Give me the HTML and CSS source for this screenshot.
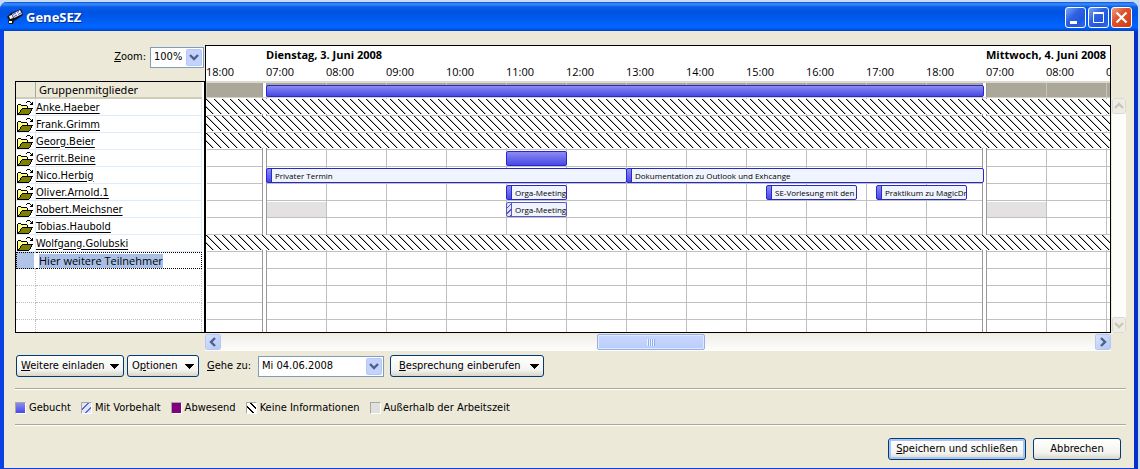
FILE: index.html
```
<!DOCTYPE html>
<html lang="de">
<head>
<meta charset="utf-8">
<title>GeneSEZ</title>
<link rel="stylesheet" href="styles.css">
</head>
<body>
<svg class="defs" aria-hidden="true">
  <symbol id="folder" viewBox="0 0 16 14" shape-rendering="crispEdges">
    <path d="M1 4h4v1h6v3H5L1 13z" fill="#ffff66"/>
    <path d="M2 13l3-5h10l-3 5z" fill="#808000"/>
    <path d="M1 3h3v1H1zM0 4h1v9H0zM4 4h6v1H4zM10 5h1v3h-1zM5 7h11v1H5zM4 8h1v1H4zM3 9h1v2H3zM2 11h1v1H2zM1 12h1v1H1zM0 13h12v1H0zM14 8h1v2h-1zM13 10h1v2h-1zM12 12h1v1h-1zM9 1h1v1H9zM10 0h3v1h-3zM13 1h1v1h-1zM15 1h1v3h-1zM13 3h2v1h-2zM14 2h1v1h-1z" fill="#000"/>
    <path d="M2 5h1v1H2zM4 6h1v1H4zM6 5h1v1H6zM2 7h1v1H2zM8 6h1v1H8z" fill="#fff"/>
  </symbol>
  <symbol id="down" viewBox="0 0 9 5" shape-rendering="crispEdges"><path d="M0 0h9v1H8v1H7v1H6v1H5v1H4V4H3V3H2V2H1V1H0z"/></symbol>
  <symbol id="chev" viewBox="0 0 10 10"><path d="M1 3l4 4 4-4" fill="none" stroke="currentColor" stroke-width="2.400"/></symbol>
</svg>
<div class="window">
  <header class="titlebar">
    <svg class="app-icon" viewBox="0 0 16 16">
      <path d="M4 4l10-4 2 6-7 5-2 1-1 3H2l-1-3 1-1-2-3z" fill="#111"/>
      <path d="M5 5l8-4 2 4-8 4z" fill="#eef"/>
      <path d="M6 5.500l3-1.500M10 3.500l2-1M7 7.500l3-1.500M11 5.500l3-1.500" stroke="#4058d8" fill="none"/>
      <path d="M2 7l3-1 1 3-3 1zM2 12h3v2H2z" fill="#fff"/>
    </svg>
    <h1 class="title">GeneSEZ</h1>
    <div class="caption-buttons">
      <button class="caption" aria-label="Minimieren"><svg viewBox="0 0 19 19"><path d="M4 13h7v3H4z" fill="#fff"/></svg></button>
      <button class="caption" aria-label="Maximieren"><svg viewBox="0 0 19 19"><path d="M4.500 5.500h10v9h-10z" fill="none" stroke="#fff"/><path d="M4 4h11v2H4z" fill="#fff"/></svg></button>
      <button class="caption close" aria-label="Schließen"><svg viewBox="0 0 19 19"><path d="M4.500 4.500l10 10M14.500 4.500l-10 10" stroke="#fff" stroke-width="2.200"/></svg></button>
    </div>
  </header>
  <main class="content">
    <section class="planner">
      <div class="side">
        <div class="zoom">
          <label for="zoom"><u>Z</u>oom:</label>
          <select id="zoom" class="combo zoom-select"><option>100%</option></select>
        </div>
        <table class="members">
          <thead><tr><th class="icon-cell"></th><th class="name-head" scope="col">Gruppenmitglieder</th></tr></thead>
          <tbody>
            <tr><td class="icon-cell"><svg class="folder"><use href="#folder"/></svg></td><td><a href="#">Anke.Haeber</a></td></tr>
            <tr><td class="icon-cell"><svg class="folder"><use href="#folder"/></svg></td><td><a href="#">Frank.Grimm</a></td></tr>
            <tr><td class="icon-cell"><svg class="folder"><use href="#folder"/></svg></td><td><a href="#">Georg.Beier</a></td></tr>
            <tr><td class="icon-cell"><svg class="folder"><use href="#folder"/></svg></td><td><a href="#">Gerrit.Beine</a></td></tr>
            <tr><td class="icon-cell"><svg class="folder"><use href="#folder"/></svg></td><td><a href="#">Nico.Herbig</a></td></tr>
            <tr><td class="icon-cell"><svg class="folder"><use href="#folder"/></svg></td><td><a href="#">Oliver.Arnold.1</a></td></tr>
            <tr><td class="icon-cell"><svg class="folder"><use href="#folder"/></svg></td><td><a href="#">Robert.Meichsner</a></td></tr>
            <tr><td class="icon-cell"><svg class="folder"><use href="#folder"/></svg></td><td><a href="#">Tobias.Haubold</a></td></tr>
            <tr><td class="icon-cell"><svg class="folder"><use href="#folder"/></svg></td><td><a href="#">Wolfgang.Golubski</a></td></tr>
            <tr class="new-row"><td class="icon-cell"></td><td><input class="new-name" aria-label="Teilnehmer hinzufügen" value="Hier weitere Teilnehmer"></td></tr>
            <tr class="blank"><td class="icon-cell"></td><td></td></tr>
            <tr class="blank"><td class="icon-cell"></td><td></td></tr>
            <tr class="blank"><td class="icon-cell"></td><td></td></tr>
            <tr class="blank last"><td class="icon-cell"></td><td></td></tr>
          </tbody>
        </table>
      </div>
      <div class="timeline">
        <div class="days slots"><strong class="day1">Dienstag, 3. Juni 2008</strong><strong class="day2">Mittwoch, 4. Juni 2008</strong></div>
        <div class="hours"><span>18:00</span><span>07:00</span><span>08:00</span><span>09:00</span><span>10:00</span><span>11:00</span><span>12:00</span><span>13:00</span><span>14:00</span><span>15:00</span><span>16:00</span><span>17:00</span><span>18:00</span><span>07:00</span><span>08:00</span><span>09:00</span></div>
        <div class="summary slots"><div class="bar total" style="grid-column: 13 / span 144"></div></div>
        <div class="canvas">
          <div class="row"><div class="unknown"></div></div>
          <div class="row"><div class="unknown"></div></div>
          <div class="row"><div class="unknown"></div></div>
          <div class="row slots"><div class="bar" style="grid-column: 61 / span 12"></div></div>
          <div class="row slots"><div class="event" style="grid-column: 13 / span 72">Privater Termin</div><div class="event until-close" style="grid-column: 85 / span 72">Dokumentation zu Outlook und Exhcange</div></div>
          <div class="row slots"><div class="event" style="grid-column: 61 / span 12">Orga-Meeting</div><div class="event" style="grid-column: 113 / span 18">SE-Vorlesung mit den</div><div class="event" style="grid-column: 135 / span 18">Praktikum zu MagicDr</div></div>
          <div class="row slots"><div class="off" style="grid-column: 13 / span 12"></div><div class="event tentative" style="grid-column: 61 / span 12">Orga-Meeting</div><div class="off" style="grid-column: 157 / span 12"></div></div>
          <div class="row"></div>
          <div class="row"><div class="unknown"></div></div>
          <div class="row"></div><div class="row"></div><div class="row"></div><div class="row"></div><div class="row last"></div>
        </div>
      </div>
      <div class="vscroll">
        <button class="arrow disabled" disabled aria-label="Nach oben"><svg class="up"><use href="#chev"/></svg></button>
        <button class="arrow disabled" disabled aria-label="Nach unten"><svg><use href="#chev"/></svg></button>
      </div>
      <div class="hscroll">
        <button class="arrow" aria-label="Nach links"><svg class="left"><use href="#chev"/></svg></button>
        <div class="track"><div class="thumb"><i></i></div></div>
        <button class="arrow" aria-label="Nach rechts"><svg class="right"><use href="#chev"/></svg></button>
      </div>
    </section>
    <section class="toolbar">
      <button class="btn menu invite"><span><u>W</u>eitere einladen</span><svg class="down"><use href="#down"/></svg></button>
      <button class="btn menu options"><span>O<u>p</u>tionen</span><svg class="down"><use href="#down"/></svg></button>
      <label class="goto" for="date"><u>G</u>ehe zu:</label>
      <select id="date" class="combo date-select"><option>Mi 04.06.2008</option></select>
      <button class="btn menu meeting"><span><u>B</u>esprechung einberufen</span><svg class="down"><use href="#down"/></svg></button>
    </section>
    <ul class="legend">
      <li><i class="key booked"></i>Gebucht</li>
      <li><i class="key maybe"></i>Mit Vorbehalt</li>
      <li><i class="key away"></i>Abwesend</li>
      <li><i class="key none"></i>Keine Informationen</li>
      <li><i class="key outside"></i>Außerhalb der Arbeitszeit</li>
    </ul>
    <footer class="actions">
      <button class="btn primary"><span><u>S</u>peichern und schließen</span></button>
      <button class="btn cancel">Abbrechen</button>
    </footer>
  </main>
</div>
</body>
</html>
```
FILE: styles.css
```
* { box-sizing: border-box; }
body {
  margin: 0;
  padding: 2px 2px 0 0;
  background: #c9daf5;
  color: #000;
  font: 11px/14px "DejaVu Sans Condensed", "DejaVu Sans", sans-serif;
}
button, select, input { font: inherit; color: inherit; margin: 0; }
.defs { position: absolute; width: 0; height: 0; }

.window {
  display: flex;
  flex-direction: column;
  min-height: calc(100vh - 2px);
  background: #ece9d8;
  border: solid #0842e0;
  border-width: 0 4px 3px;
  border-right-color: #0430c8;
  border-radius: 7px 7px 0 0;
}
.titlebar {
  display: flex;
  align-items: center;
  gap: 3px;
  height: 29px;
  margin: 0 -4px;
  padding: 1px 6px 0 7px;
  border-radius: 7px 7px 0 0;
  background: linear-gradient(#0a50d8, #3a90ff 2px, #0a5ce8 5px, #0053e1 10px, #0058ee 16px, #0066ff 24px, #0060fc 26px, #0040c8);
}
.app-icon { width: 16px; height: 16px; }
.title {
  flex: 1;
  margin: 0;
  color: #fff;
  font: bold 13px/16px "Open Sans", sans-serif;
  text-shadow: 1px 1px #0a2a80;
}
.caption-buttons { display: flex; gap: 2px; }
.caption {
  width: 21px;
  height: 21px;
  padding: 0;
  border: 1px solid #fff;
  border-radius: 3px;
  background: linear-gradient(135deg, #7ea4f4, #2f62e4 40%, #1f56e0 70%, #2c6cf0);
}
.caption svg { display: block; width: 19px; height: 19px; }
.close { background: linear-gradient(135deg, #f0a080, #e0512c 40%, #d03c12); }

.content { flex: 1; display: flex; flex-direction: column; padding: 14px 8px 8px 11px; }

.planner {
  display: grid;
  grid-template-columns: 190px minmax(0, 1fr) 15px;
}
.side { display: flex; flex-direction: column; }
.zoom { display: flex; justify-content: flex-end; align-items: center; gap: 4px; height: 36px; padding: 0 1px 12px 0; }
.combo {
  appearance: none;
  height: 21px;
  padding: 0 18px 0 3px;
  border: 1px solid #7f9db9;
  border-radius: 0;
  background:
    url("data:image/svg+xml,%3Csvg xmlns='http://www.w3.org/2000/svg' width='16' height='17'%3E%3Crect x='.5' y='.5' width='15' height='16' rx='1' fill='%23c3d3fd' stroke='%23b5c8f5'/%3E%3Cpath d='M4 6l4 4 4-4' fill='none' stroke='%234d6185' stroke-width='2.400'/%3E%3C/svg%3E") no-repeat right 1px center,
    #fff;
}
.zoom-select { width: 54px; }
.date-select { width: 126px; }

.members {
  width: 100%;
  table-layout: fixed;
  border-collapse: separate;
  border-spacing: 0;
  border: 1px solid #000;
  padding-right: 2px;
  background: #fff;
}
.members th, .members td { height: 17px; padding: 0; line-height: 14px; }
.members td { padding-top: 1px; }
.members th { background: #ece9d8; border-bottom: 2px solid #d0ccba; text-align: left; font-weight: normal; }
.members .icon-cell { width: 20px; }
.members td { border-bottom: 1px solid #deebfa; border-right: 1px solid #deebfa; }
.members th.icon-cell { border-right: 1px solid #aca899; }
.members th.name-head { padding-left: 3px; font-family: "Noto Sans", sans-serif; font-size: 11px; }
.members a { color: #000; text-decoration: underline; text-underline-offset: 2px; }
.folder { display: block; width: 16px; height: 14px; margin-left: 1px; }
.members .new-row td { padding-top: 0; border: 1px dotted #000; border-left: 0; }
.members .new-row .icon-cell { background: #b0c4e8; border-left: 1px dotted #000; border-right: 2px solid #fff; }
.new-name {
  display: block;
  width: 124px;
  height: 14px;
  margin-left: 3px;
  padding: 0;
  border: 0;
  background: #a9bfe6;
  font-family: "Open Sans", sans-serif;
  font-size: 11px;
}
.members .blank td { border-bottom: 1px dotted #c0c0c0; border-right: 1px dotted #c0c0c0; }
.members .last td { height: 12px; border-bottom: 0; }

.timeline { border: 1px solid #000; background: #fff; overflow: hidden; }
.slots { display: grid; grid-template-columns: repeat(200, 5px); }
.days { height: 17px; white-space: nowrap; font: 11px/17px "Open Sans", sans-serif; }
.day1 { grid-column: 13 / span 60; }
.day2 { grid-column: 157 / span 30; }
.hours { display: grid; grid-auto-flow: column; grid-auto-columns: 60px; height: 18px; font: 11px/18px "Open Sans", sans-serif; }
.summary {
  height: 18px;
  border-top: 2px solid #dcd9cf;
  background:
    linear-gradient(#d4d1c6, #d4d1c6) 0 14px / 100% 1px no-repeat,
    linear-gradient(90deg, transparent 56px, #999 56px 57px, #fff 57px 60px, #999 60px 61px, transparent 61px) 0 0 / 720px 100%,
    linear-gradient(90deg, #c6c3bb 1px, transparent 1px) 0 0 / 60px 100%,
    linear-gradient(#aca899 14px, #fff 14px);
}
.canvas {
  background:
    linear-gradient(#fff, #fff) 0 0 / 1px 100% no-repeat,
    linear-gradient(90deg, transparent 56px, #999 56px 57px, #fff 57px 60px, #999 60px 61px, transparent 61px) 0 0 / 720px 100%,
    linear-gradient(90deg, #c0c0c0 1px, transparent 1px) 0 0 / 60px 100%,
    linear-gradient(transparent 16px, #c0c0c0 16px) 0 0 / 100% 17px,
    #fff;
}
.row { height: 17px; padding-top: 1px; overflow: hidden; }
.row.last { height: 12px; }
.unknown {
  height: 15px;
  margin-top: -1px;
  background: #fff url("data:image/svg+xml,%3Csvg xmlns='http://www.w3.org/2000/svg' width='8' height='8' shape-rendering='crispEdges'%3E%3Cpath d='M0 0h1v1H0zM1 1h1v1H1zM2 2h1v1H2zM3 3h1v1H3zM4 4h1v1H4zM5 5h1v1H5zM6 6h1v1H6zM7 7h1v1H7z'/%3E%3Cpath d='M1 0h1v1H1zM2 1h1v1H2zM3 2h1v1H3zM4 3h1v1H4zM5 4h1v1H5zM6 5h1v1H6zM7 6h1v1H7zM0 7h1v1H0z' fill='%23bbb'/%3E%3C/svg%3E");
}
.bar, .event { height: 15px; margin-right: -1px; border: 1px solid #2828c8; border-radius: 2px; }
.bar { background: linear-gradient(#8c8cf0, #4848e8); }
.total { height: 12px; margin: 2px 2px 0 0; }
.event {
  padding-left: 8px;
  overflow: hidden;
  white-space: nowrap;
  font: 8px/14px "Open Sans", sans-serif;
  background: linear-gradient(90deg, transparent 4px, #2828c8 4px 5px, #f0f4ff 5px), linear-gradient(#8c8cf0, #4848e8);
}
.until-close { margin-right: 2px; }
.tentative {
  border-color: #5858c0;
  background: linear-gradient(90deg, transparent 4px, #5858c0 4px 5px, #f0f4ff 5px), repeating-linear-gradient(135deg, #dfe3ff 0 3px, #5858c0 3px 4px);
}
.off { height: 15px; margin-left: 1px; background: #e3e1e1; }

.vscroll {
  display: flex;
  flex-direction: column;
  justify-content: space-between;
  margin: 53px 0 0 1px;
  background: #fdfdf9;
}
.hscroll { grid-column: 2; display: flex; height: 17px; margin-top: 1px; background: linear-gradient(#f0eee6, #fdfdfb); }
.arrow {
  display: flex;
  align-items: center;
  justify-content: center;
  width: 16px;
  height: 16px;
  padding: 0;
  border: 1px solid #fff;
  border-radius: 2px;
  outline: 1px solid #b4c8f0;
  outline-offset: -1px;
  background: linear-gradient(135deg, #d6e2ff, #b4c8f8);
  color: #4d6185;
}
.vscroll .arrow { width: 14px; }
.arrow svg { width: 10px; height: 10px; flex: none; }
.up { transform: rotate(180deg); }
.left { transform: rotate(90deg); }
.right { transform: rotate(-90deg); }
.arrow.disabled { background: #eeede5; color: #c9c7ba; outline-color: #dddbd0; }
.track { flex: 1; }
.thumb {
  display: flex;
  align-items: center;
  justify-content: center;
  width: 12.4%;
  height: 16px;
  margin-left: 43%;
  border: 1px solid #98b0e8;
  border-radius: 2px;
  box-shadow: inset 0 0 0 1px #e0e9ff;
  background: linear-gradient(#cad8fe, #b8ccfb);
}
.thumb i { width: 8px; height: 7px; background: repeating-linear-gradient(90deg, #eef4fe 0 1px, #8cb0f8 1px 2px); }

.toolbar { display: flex; align-items: center; height: 37px; padding: 0 0 7px 1px; }
.btn {
  height: 22px;
  padding: 0 5px;
  border: 1px solid #003c74;
  border-radius: 3px;
  background: linear-gradient(#fff, #f3f3ef 70%, #d9d4c8);
  white-space: nowrap;
}
.menu { display: flex; align-items: center; justify-content: space-between; margin-right: 3px; padding: 0 4px; }
.invite { width: 108px; }
.options { width: 72px; }
.down { width: 9px; height: 5px; }
.goto { width: 48px; margin: 0 3px 0 5px; white-space: nowrap; }
.meeting { width: 154px; margin-left: 6px; padding-left: 8px; }

.legend {
  display: flex;
  align-items: center;
  gap: 10px;
  height: 37px;
  margin: 0;
  padding: 2px 0 0;
  border: solid #aca899;
  border-width: 1px 0;
  box-shadow: 0 1px #fff, inset 0 1px #fff;
  list-style: none;
}
.legend li { display: flex; align-items: center; gap: 3px; }
.key { width: 11px; height: 12px; border: 1px solid #aca899; border-right-color: #fff; border-bottom-color: #fff; }
.booked { background: linear-gradient(#8c8cf0, #4848e8); }
.maybe { background: repeating-linear-gradient(135deg, #e0e4ff 0 4px, #6068c8 4px 5px); }
.away { background: #800080; }
.none { background: repeating-linear-gradient(45deg, #fff 0 4px, #000 4px 5px); }
.outside { background: #e0e0e0; }

.actions { display: flex; justify-content: flex-end; gap: 7px; padding: 13px 5px 0 0; }
.primary { width: 138px; box-shadow: inset 0 0 0 2px #a8c4f4; }
.cancel { width: 88px; }
```
